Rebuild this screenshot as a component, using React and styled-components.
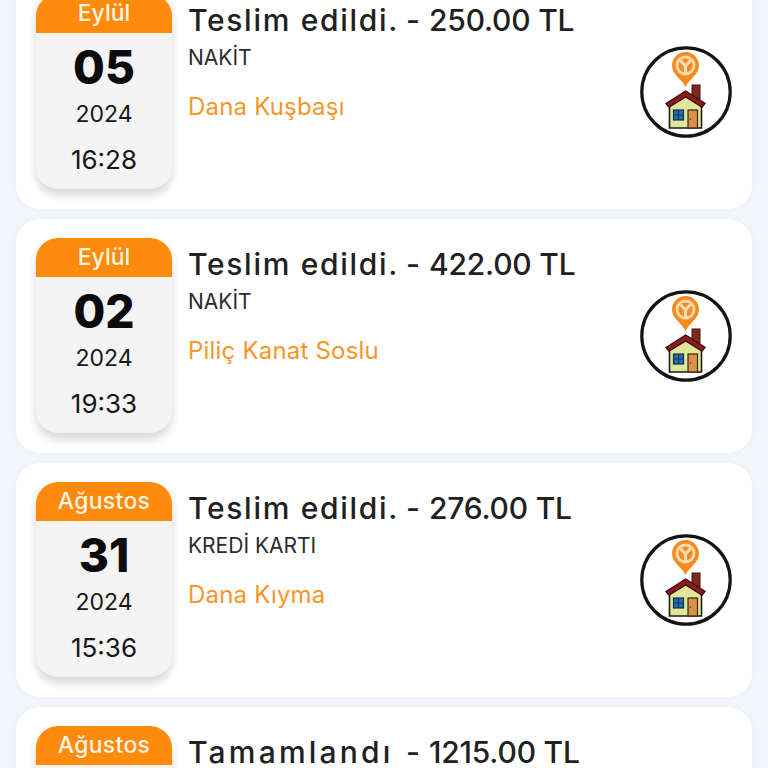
import React from "react";
import styled, { createGlobalStyle } from "styled-components";

const GlobalStyle = createGlobalStyle`
  html, body {
    margin: 0;
    padding: 0;
    background: #f2f6fa;
  }
  * {
    box-sizing: border-box;
  }
`;

const Page = styled.div`
  width: 768px;
  height: 768px;
  overflow: hidden;
  background: #f2f6fa;
  font-family: Inter, "Noto Sans", "Liberation Sans", sans-serif;
`;

const OrderList = styled.ul`
  list-style: none;
  margin: -25px 0 0;
  padding: 0 16px;
  display: flex;
  flex-direction: column;
  gap: 10px;
`;

const OrderCard = styled.li`
  height: 234px;
  flex-shrink: 0;
  display: flex;
  align-items: flex-start;
  padding: 19px 20px 0;
  background: #fff;
  border-radius: 24px;
  box-shadow: 0 0 6px rgba(120, 130, 140, 0.05);
`;

const DateBox = styled.div`
  width: 136px;
  height: 195px;
  flex-shrink: 0;
  display: flex;
  flex-direction: column;
  align-items: center;
  background: #f4f4f4;
  border-radius: 22px;
  box-shadow: 0 6px 10px rgba(0, 0, 0, 0.16);
  overflow: hidden;
  color: #171717;
`;

const Month = styled.div`
  width: 100%;
  height: 39px;
  line-height: 39px;
  text-align: center;
  background: #ff8a0c;
  color: #fff3e2;
  font-size: 23px;
  font-weight: 500;
  letter-spacing: ${(props) => (props.$long ? "0.3px" : "0")};
`;

const Day = styled.div`
  height: 58px;
  margin-top: 5px;
  line-height: 58px;
  font-size: 46px;
  font-weight: 800;
  color: #0b0b0b;
`;

const Year = styled.div`
  height: 36px;
  line-height: 36px;
  font-size: 23px;
`;

const Time = styled.div`
  height: 46px;
  margin-top: 5px;
  line-height: 46px;
  font-size: 26px;
`;

const Details = styled.div`
  flex: 1;
  min-width: 0;
  padding-left: 16px;
`;

const Title = styled.h3`
  display: flex;
  gap: 11px;
  margin: 11px 0 0;
  line-height: 30px;
  font-size: 30px;
  font-weight: 500;
  color: #212121;
  white-space: nowrap;
`;

const Status = styled.span`
  width: 207px;
  letter-spacing: ${(props) => props.$spacing}px;
`;

const Dash = styled.span`
  width: 12px;
`;

const Amount = styled.span`
  letter-spacing: -0.2px;
`;

const Payment = styled.div`
  height: 32px;
  margin-top: 7px;
  line-height: 32px;
  font-size: 21px;
  color: #2b2b2b;
`;

const Product = styled.div`
  margin-top: 17px;
  line-height: 32px;
  font-size: 24px;
  letter-spacing: 0.2px;
  color: #f6962a;
`;

const DeliveryBadge = styled.svg`
  width: 92px;
  height: 92px;
  flex-shrink: 0;
  margin-top: 52px;
`;

function HomeDeliveryIcon() {
  return (
    <DeliveryBadge viewBox="0 0 92 92">
      <circle cx="46" cy="46" r="44.2" fill="#fff" stroke="#141414" strokeWidth="3.2" />
      <path
        d="M45.5 41 C42 33 32 29 32 19.5 C32 12 38 6 45.5 6 C53 6 59 12 59 19.5 C59 29 49 33 45.5 41 Z"
        fill="#f58a1f"
      />
      <circle cx="45.5" cy="19.5" r="8.5" fill="none" stroke="#fcdcb6" strokeWidth="2.8" />
      <path
        d="M40.5 14.5 L45.5 20 L50.5 14.5 M45.5 20 V27"
        fill="none"
        stroke="#fcdcb6"
        strokeWidth="3"
      />
      <rect x="52" y="39" width="8" height="14" fill="#7c2a1f" stroke="#3a1410" strokeWidth="1" />
      <path d="M29.5 58 L45.7 49 L61.5 58 V82 H29.5 Z" fill="#e2e69a" stroke="#1d1d12" strokeWidth="1.6" />
      <path d="M26 57.5 L45.7 45 L65 57.5 L62 61 L45.7 51 L29 61 Z" fill="#8e1b1e" stroke="#3a0f10" strokeWidth="1.4" />
      <rect x="33.5" y="64" width="10" height="10" fill="#1f6fb2" stroke="#12304a" strokeWidth="1.2" />
      <path d="M38.5 64 V74 M33.5 69 H43.5" stroke="#12304a" strokeWidth="1" />
      <rect x="48" y="64" width="9.5" height="18" fill="#d9924c" stroke="#3b2412" strokeWidth="1.2" />
      <circle cx="50.5" cy="73" r="0.8" fill="#3b2412" />
    </DeliveryBadge>
  );
}

// the last card runs off the bottom of the window, only its top part shows
const orders = [
  { month: "Eylül", day: "05", year: "2024", time: "16:28", status: "Teslim edildi.", spacing: 1.7, amount: "250.00 TL", payment: "NAKİT", product: "Dana Kuşbaşı" },
  { month: "Eylül", day: "02", year: "2024", time: "19:33", status: "Teslim edildi.", spacing: 1.7, amount: "422.00 TL", payment: "NAKİT", product: "Piliç Kanat Soslu" },
  { month: "Ağustos", day: "31", year: "2024", time: "15:36", status: "Teslim edildi.", spacing: 1.7, amount: "276.00 TL", payment: "KREDİ KARTI", product: "Dana Kıyma" },
  { month: "Ağustos", status: "Tamamlandı", spacing: 3.2, amount: "1215.00 TL" },
];

export default function App() {
  return (
    <>
      <GlobalStyle />
      <Page>
        <OrderList>
          {orders.map((order) => (
            <OrderCard key={order.amount}>
              <DateBox>
                <Month $long={order.month.length > 5}>{order.month}</Month>
                <Day>{order.day}</Day>
                <Year>{order.year}</Year>
                <Time>{order.time}</Time>
              </DateBox>
              <Details>
                <Title>
                  <Status $spacing={order.spacing}>{order.status}</Status>
                  <Dash>-</Dash>
                  <Amount>{order.amount}</Amount>
                </Title>
                <Payment>{order.payment}</Payment>
                <Product>{order.product}</Product>
              </Details>
              <HomeDeliveryIcon />
            </OrderCard>
          ))}
        </OrderList>
      </Page>
    </>
  );
}
